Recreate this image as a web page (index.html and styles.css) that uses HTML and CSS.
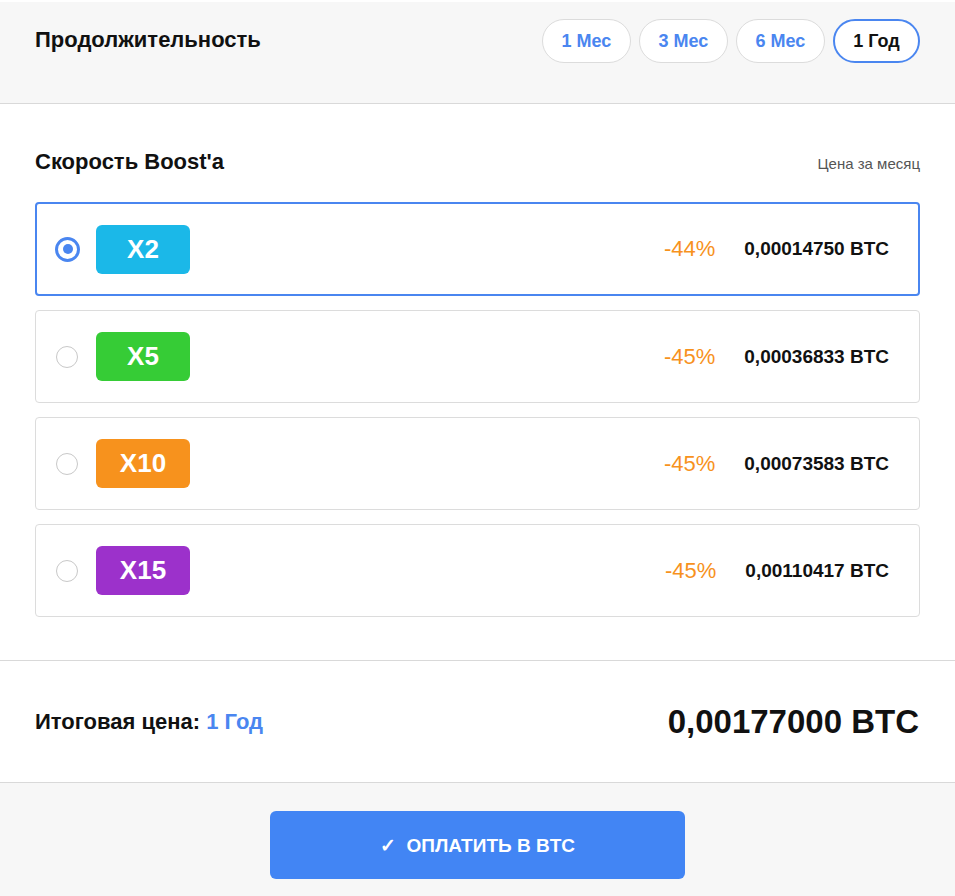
FILE: index.html
```html
<!DOCTYPE html>
<html lang="ru">
<head>
  <meta charset="UTF-8" />
  <meta name="viewport" content="width=device-width, initial-scale=1.0"/>
  <title>Boost - Оплата</title>
  <link rel="stylesheet" href="styles.css">
</head>
<body>

  <!-- Duration -->
  <div class="duration">
    <h2 class="title">Продолжительность</h2>
    <div class="pills">
      <button class="pill">1 Мес</button>
      <button class="pill">3 Мес</button>
      <button class="pill">6 Мес</button>
      <button class="pill active">1 Год</button>
    </div>
  </div>

  <!-- Boost speed -->
  <div class="speed">
    <div class="speed-head">
      <h2 class="title">Скорость Boost'a</h2>
      <span class="hint">Цена за месяц</span>
    </div>

    <div class="option selected">
      <span class="radio"></span>
      <span class="badge x2">X2</span>
      <span class="discount">-44%</span>
      <span class="price">0,00014750 BTC</span>
    </div>
    <div class="option">
      <span class="radio"></span>
      <span class="badge x5">X5</span>
      <span class="discount">-45%</span>
      <span class="price">0,00036833 BTC</span>
    </div>
    <div class="option">
      <span class="radio"></span>
      <span class="badge x10">X10</span>
      <span class="discount">-45%</span>
      <span class="price">0,00073583 BTC</span>
    </div>
    <div class="option">
      <span class="radio"></span>
      <span class="badge x15">X15</span>
      <span class="discount">-45%</span>
      <span class="price">0,00110417 BTC</span>
    </div>
  </div>

  <!-- Total -->
  <div class="total">
    <div class="total-label">Итоговая цена: <span class="accent">1 Год</span></div>
    <div class="total-price">0,00177000 BTC</div>
  </div>

  <!-- Pay -->
  <div class="pay">
    <button class="pay-btn">✓&nbsp; ОПЛАТИТЬ В BTC</button>
  </div>

</body>
</html>
```

FILE: styles.css
```css
body {
  font-family: "Liberation Sans", Arial, sans-serif;
  background: #fff;
  margin: 0;
  color: #111;
}
.title {
  margin: 0;
  font-size: 22px;
  line-height: 26px;
  font-weight: bold;
  color: #111;
}
.duration {
  background: #f7f7f7;
  border-top: 2px solid #fff;
  border-bottom: 1px solid #d9d9d9;
  height: 101px;
  padding: 0 35px;
  display: flex;
  align-items: flex-start;
  justify-content: space-between;
}
.duration .title {
  margin-top: 25px;
}
.pills {
  display: flex;
  gap: 8px;
  margin-top: 17px;
}
.pill {
  width: 89px;
  height: 44px;
  border: 1px solid #dcdcdc;
  border-radius: 22px;
  background: #fff;
  color: #4a86f0;
  font-family: inherit;
  font-size: 18px;
  font-weight: bold;
  cursor: pointer;
}
.pill.active {
  width: 87px;
  border: 2px solid #4a86f0;
  color: #111;
}
.speed {
  padding: 45px 35px 43px;
  border-bottom: 1px solid #d9d9d9;
}
.speed-head {
  display: flex;
  justify-content: space-between;
  align-items: baseline;
  margin-bottom: 27px;
}
.hint {
  font-size: 15px;
  color: #555;
}
.option {
  display: flex;
  align-items: center;
  height: 93px;
  box-sizing: border-box;
  border: 1px solid #dcdcdc;
  border-radius: 4px;
  padding: 0 30px 0 20px;
  margin-bottom: 14px;
}
.option:last-child {
  margin-bottom: 0;
}
.option.selected {
  height: 94px;
  border: 2px solid #4a86f0;
  padding: 0 29px 0 19px;
}
.radio {
  width: 22px;
  height: 22px;
  border: 1px solid #c8c8c8;
  border-radius: 50%;
  box-sizing: border-box;
  margin-right: 18px;
  position: relative;
}
.selected .radio {
  border: 3px solid #4a86f0;
  width: 25px;
  height: 25px;
  margin-left: -1px;
  margin-right: 16px;
}
.selected .radio::after {
  content: "";
  position: absolute;
  left: 4.5px;
  top: 4.5px;
  width: 10px;
  height: 10px;
  border-radius: 50%;
  background: #4a86f0;
}
.badge {
  width: 94px;
  height: 49px;
  line-height: 49px;
  border-radius: 6px;
  text-align: center;
  color: #fff;
  font-size: 26px;
  font-weight: bold;
}
.x2 { background: #1bb8e8; }
.x5 { background: #36cc36; }
.x10 { background: #f7921d; }
.x15 { background: #9c31cb; }
.discount {
  margin-left: auto;
  color: #f7921d;
  font-size: 22px;
  margin-right: 29px;
}
.price {
  font-size: 19px;
  font-weight: bold;
}
.total {
  height: 121px;
  padding: 0 36px 0 35px;
  border-bottom: 1px solid #d9d9d9;
  display: flex;
  justify-content: space-between;
  align-items: center;
}
.total-label {
  font-size: 22px;
  font-weight: bold;
}
.accent {
  color: #4a86f0;
}
.total-price {
  font-size: 33px;
  font-weight: bold;
}
.pay {
  background: #f7f7f7;
  padding: 28px 0 30px;
  display: flex;
  justify-content: center;
}
.pay-btn {
  width: 415px;
  height: 68px;
  background: #4285f4;
  color: #fff;
  border: none;
  border-radius: 6px;
  font-family: inherit;
  font-size: 19px;
  font-weight: bold;
  cursor: pointer;
}
```
